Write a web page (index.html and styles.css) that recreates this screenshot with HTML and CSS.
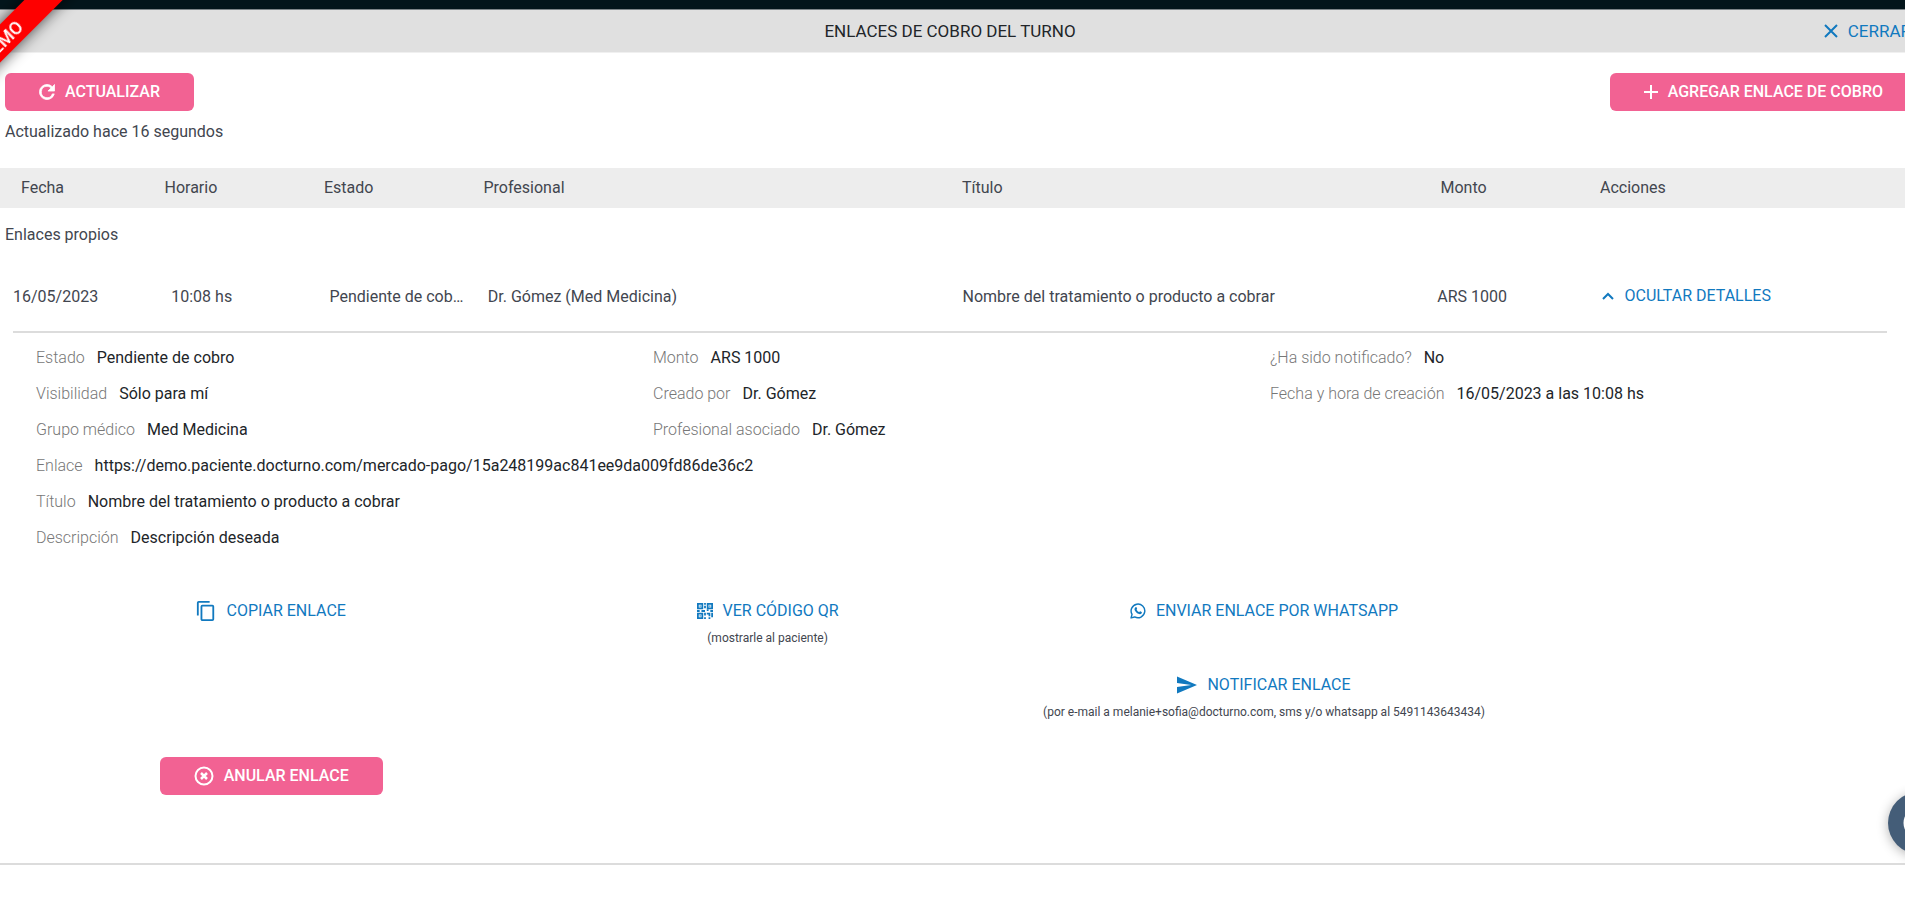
FILE: index.html
```html
<!DOCTYPE html>
<html lang="es">
<head>
<meta charset="utf-8">
<meta name="viewport" content="width=device-width, initial-scale=1">
<title>Enlaces de cobro del turno</title>
<link rel="stylesheet" href="styles.css">
</head>
<body>
<div class="ribbon">DEMO</div>
<div class="topbar"></div>
<header class="header">
  <h1 class="header-title">ENLACES DE COBRO DEL TURNO</h1>
  <button class="link close" type="button">
    <svg class="icon icon-small" viewBox="0 0 14 14" fill="none" stroke="currentColor" stroke-width="2"><path d="M1 1l12 12M13 1L1 13"/></svg>
    CERRAR
  </button>
</header>
<main class="content">
  <div class="toolbar">
    <div class="refresh">
      <button class="btn" type="button">
        <svg class="icon" viewBox="3.500 3.500 17 17" fill="currentColor" stroke="currentColor" stroke-width="0.8"><path d="M17.65 6.35A7.96 7.96 0 0 0 12 4a8 8 0 1 0 7.73 10h-2.08A6 6 0 1 1 12 6c1.66 0 3.14.69 4.22 1.78L13 11h7V4z"/></svg>
        ACTUALIZAR
      </button>
      <p class="refresh-note">Actualizado hace 16 segundos</p>
    </div>
    <button class="btn btn-add" type="button">
      <svg class="icon icon-small" viewBox="0 0 14 14" fill="none" stroke="currentColor" stroke-width="2"><path d="M7 0v14M0 7h14"/></svg>
      AGREGAR ENLACE DE COBRO
    </button>
  </div>

  <table class="links">
    <thead>
      <tr class="row row-head">
        <th class="first" scope="col">Fecha</th><th scope="col">Horario</th><th scope="col">Estado</th><th scope="col">Profesional</th><th scope="col">Título</th><th scope="col">Monto</th><th scope="col">Acciones</th>
      </tr>
    </thead>
    <tbody>
      <tr class="row-group"><th scope="rowgroup">Enlaces propios</th></tr>
      <tr class="row row-data">
        <td>16/05/2023</td>
        <td>10:08 hs</td>
        <td>Pendiente de cobro</td>
        <td>Dr. Gómez (Med Medicina)</td>
        <td>Nombre del tratamiento o producto a cobrar</td>
        <td>ARS 1000</td>
        <td><button class="link toggle" type="button"><svg class="icon icon-small" viewBox="0 0 14 14" fill="none" stroke="currentColor" stroke-width="2"><path d="M2 10l5-5 5 5"/></svg>OCULTAR DETALLES</button></td>
      </tr>
    </tbody>
  </table>

  <section class="details">
    <dl class="facts">
      <div><dt>Estado</dt><dd>Pendiente de cobro</dd></div>
      <div><dt>Monto</dt><dd>ARS 1000</dd></div>
      <div><dt>¿Ha sido notificado?</dt><dd>No</dd></div>
      <div><dt>Visibilidad</dt><dd>Sólo para mí</dd></div>
      <div><dt>Creado por</dt><dd>Dr. Gómez</dd></div>
      <div><dt>Fecha y hora de creación</dt><dd>16/05/2023 a las 10:08 hs</dd></div>
      <div><dt>Grupo médico</dt><dd>Med Medicina</dd></div>
      <div><dt>Profesional asociado</dt><dd>Dr. Gómez</dd></div>
      <div class="wide"><dt>Enlace</dt><dd>https://demo.paciente.docturno.com/mercado-pago/15a248199ac841ee9da009fd86de36c2</dd></div>
      <div class="wide"><dt>Título</dt><dd>Nombre del tratamiento o producto a cobrar</dd></div>
      <div class="wide"><dt>Descripción</dt><dd>Descripción deseada</dd></div>
    </dl>

    <div class="actions">
      <div class="action">
        <button class="link" type="button">
          <svg class="icon icon-large" viewBox="1 1 22 22" fill="currentColor"><path d="M16 1H4a2 2 0 0 0-2 2v14h2V3h12zm3 4H8a2 2 0 0 0-2 2v14c0 1.100.9 2 2 2h11a2 2 0 0 0 2-2V7a2 2 0 0 0-2-2zm0 16H8V7h11z"/></svg>
          COPIAR ENLACE
        </button>
      </div>
      <div class="action">
        <button class="link" type="button">
          <svg class="icon" viewBox="0 0 18 18" fill="none" stroke="currentColor" stroke-width="2"><path d="M1 1h5v5H1zM12 1h5v5h-5zM1 12h5v5H1z"/><path d="M3 3.500h1M14 3.500h1M3 14.500h1M8 1h2M9 3v3M0 9h3M5 9h4M11 8h2M15 9h3M9 11v3M8 17h2M11 12h3v3M17 11v3M13 17h2M16 15h2"/></svg>
          VER CÓDIGO QR
        </button>
        <small>(mostrarle al paciente)</small>
      </div>
      <div class="action">
        <button class="link" type="button">
          <svg class="icon" viewBox="0 0 18 18"><path d="M1.200 16.800l1.100-4A7.700 7.700 0 1 1 5.300 15.700z" fill="none" stroke="currentColor" stroke-width="1.600" stroke-linejoin="round"/><path d="M6.200 4.800c.4-.4.900-.3 1.100.1l.7 1.500c.1.300-.5.900-.6 1.200.7 1.300 1.700 2.200 3 2.700.3-.1.800-1 1.100-.9l1.700.8c.3.200.1 1.300-.3 1.700-.8.900-2.200.9-3.500.3-2-.9-3.300-2.200-4.100-4-.5-1.400-.1-2.500.9-3.400z" fill="currentColor"/></svg>
          ENVIAR ENLACE POR WHATSAPP
        </button>
      </div>
      <div class="action action-notify">
        <button class="link" type="button">
          <svg class="icon icon-large" viewBox="2 2 21 20" fill="currentColor"><path d="M2 21l21-9L2 3v7l15 2-15 2z"/></svg>
          NOTIFICAR ENLACE
        </button>
        <small>(por e-mail a melanie+sofia@docturno.com, sms y/o whatsapp al 5491143643434)</small>
      </div>
      <div class="action action-cancel">
        <button class="btn" type="button">
          <svg class="icon icon-large" viewBox="0 0 20 20" fill="none" stroke="currentColor" stroke-width="2"><circle cx="10" cy="10" r="8.500"/><path d="M7 7l6 6M13 7l-6 6" stroke-width="2.500"/></svg>
          ANULAR ENLACE
        </button>
      </div>
    </div>
  </section>
</main>
<button class="chat" type="button" aria-label="Chat"><svg viewBox="0 0 32 32" fill="none" stroke="currentColor" stroke-width="3"><circle cx="16" cy="16" r="14"/></svg></button>
</body>
</html>
```
FILE: styles.css
```css
* {
  box-sizing: border-box;
}

body {
  margin: 0;
  min-height: 100vh;
  overflow: hidden;
  background: #fff;
  color: #42464f;
  font: 400 16px/20px Roboto, "Liberation Sans", sans-serif;
}

button {
  border: 0;
  background: none;
  font: inherit;
  cursor: pointer;
}

/* Corner ribbon */
.ribbon {
  position: fixed;
  z-index: 2;
  top: 28px;
  left: -98px;
  width: 200px;
  height: 27px;
  background: #fe0000;
  box-shadow: 0 0 15px rgba(0, 0, 0, 0.7);
  color: #fff;
  font-size: 18px;
  font-weight: 500;
  line-height: 27px;
  text-align: center;
  transform: rotate(-45deg);
}

.topbar {
  height: 10px;
  border-bottom: 1px solid #7c8488;
  background: #03151b;
}

.header {
  position: relative;
  display: flex;
  align-items: center;
  justify-content: center;
  height: 43px;
  padding-right: 5px;
  border-bottom: 1px solid #f0f0f0;
  background: #e0e0e0;
}

.header-title {
  margin: 0;
  color: #212529;
  font-size: 17px;
  font-weight: 400;
}

.close {
  position: absolute;
  right: -6px;
  font-size: 17px;
}

/* Icons and buttons */
.icon {
  flex: none;
  width: 16px;
  height: 16px;
}

.icon-small {
  width: 14px;
  height: 14px;
}

.icon-large {
  width: 20px;
  height: 20px;
}

.link {
  display: inline-flex;
  align-items: center;
  gap: 10px;
  padding: 0;
  color: #1179bf;
  white-space: nowrap;
}

.btn {
  display: inline-flex;
  align-items: center;
  gap: 10px;
  height: 38px;
  padding: 0 34px;
  border-radius: 6px;
  background: #f26293;
  color: #fff;
  font-weight: 500;
  white-space: nowrap;
}

.toolbar {
  display: flex;
  align-items: flex-start;
  justify-content: space-between;
  height: 115px;
  padding: 20px 0 0 5px;
}

.btn-add {
  margin-right: -12px;
}

.refresh-note {
  margin: 11px 0 0;
}

/* Table */
.links,
.links thead,
.links tbody {
  display: block;
}

.links {
  border-collapse: collapse;
}

.links th,
.links td {
  padding: 0;
  font-weight: 400;
  text-align: left;
}

.row {
  display: grid;
  grid-template-columns: repeat(3, minmax(0, 1fr)) repeat(2, minmax(0, 3fr)) minmax(0, 1fr) minmax(0, 2fr);
  align-items: center;
}

.row-head {
  height: 40px;
  margin-right: -14px;
  padding-left: 5px;
  background: #ededed;
}

.links .first {
  padding-left: 16px;
}

.row-group {
  display: block;
  padding: 17px 5px;
}

.row-data {
  height: 69px;
  margin: 0 -7px 0 13px;
}

.row-data td {
  padding-right: 24px;
  overflow: hidden;
  text-overflow: ellipsis;
  white-space: nowrap;
}

.toggle {
  padding-left: 5px;
}

/* Details */
.details {
  margin-left: 13px;
  margin-right: 18px;
  border-top: 2px solid #dcdcdc;
}

.facts {
  display: grid;
  grid-template-columns: repeat(3, 1fr);
  row-gap: 16px;
  margin: 0;
  padding: 15px 0 0 23px;
}

.facts div {
  display: flex;
  gap: 12px;
}

.facts .wide {
  grid-column: 1 / -1;
}

.facts dt {
  color: #777;
  font-weight: 300;
}

.facts dd {
  margin: 0;
  color: #212529;
}

.actions {
  display: grid;
  grid-template-columns: repeat(3, 1fr);
  width: 80%;
  margin-top: 53px;
  padding-left: 10px;
}

.action {
  display: flex;
  flex-direction: column;
  align-items: center;
  gap: 9px;
  min-height: 74px;
}

.action small {
  font-size: 12px;
  line-height: 16px;
}

.action-notify {
  grid-column: 3;
}

.action-cancel {
  grid-column: 1;
  padding-top: 8px;
}

.content {
  padding-bottom: 40px;
  border-bottom: 2px solid #dcdcdc;
}

/* Chat launcher */
.chat {
  position: fixed;
  right: -45px;
  bottom: 53px;
  display: grid;
  place-items: center;
  width: 62px;
  height: 62px;
  padding: 0;
  border-radius: 50%;
  background: #445d78;
  box-shadow: 0 2px 12px rgba(0, 0, 0, 0.3);
  color: #fff;
}

.chat svg {
  width: 32px;
  height: 32px;
}
```
